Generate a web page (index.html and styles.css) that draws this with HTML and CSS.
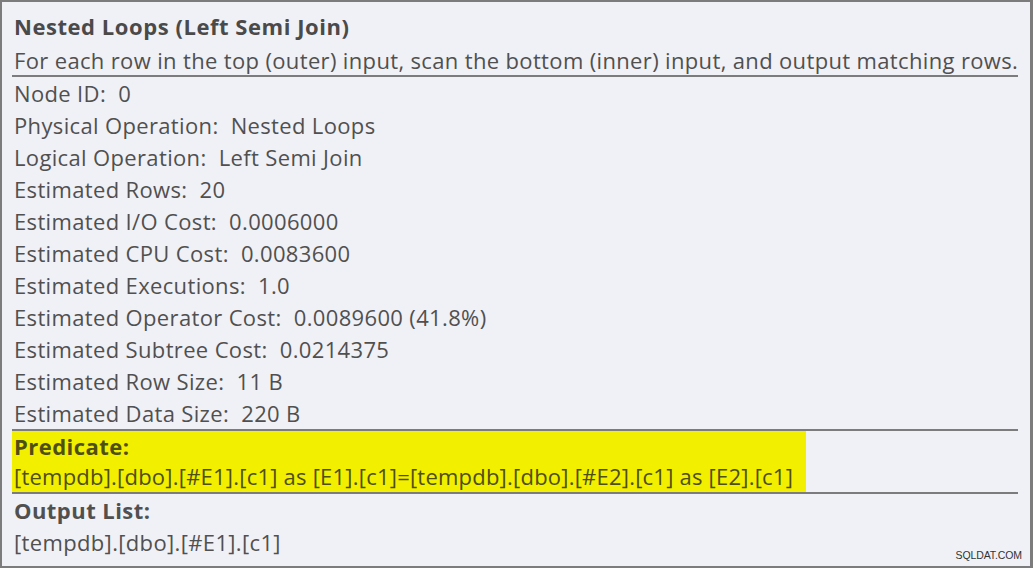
FILE: index.html
```html
<!DOCTYPE html>
<html>
<head>
<meta charset="utf-8">
<link rel="stylesheet" href="styles.css">
</head>
<body>
<div class="panel">
  <div class="title">Nested Loops (Left Semi Join)</div>
  <div class="desc">For each row in the top (outer) input, scan the bottom (inner) input, and output matching rows.</div>
  <div class="props">
    <div class="row">Node ID:&nbsp; 0</div>
    <div class="row">Physical Operation:&nbsp; Nested Loops</div>
    <div class="row">Logical Operation:&nbsp; Left Semi Join</div>
    <div class="row">Estimated Rows:&nbsp; 20</div>
    <div class="row">Estimated I/O Cost:&nbsp; 0.0006000</div>
    <div class="row">Estimated CPU Cost:&nbsp; 0.0083600</div>
    <div class="row">Estimated Executions:&nbsp; 1.0</div>
    <div class="row">Estimated Operator Cost:&nbsp; 0.0089600 (41.8%)</div>
    <div class="row">Estimated Subtree Cost:&nbsp; 0.0214375</div>
    <div class="row">Estimated Row Size:&nbsp; 11 B</div>
    <div class="row">Estimated Data Size:&nbsp; 220 B</div>
  </div>
  <div class="section">
    <div class="highlight">
      <div class="sec-head pred-head">Predicate:</div>
      <div class="sec-val pred-val">[tempdb].[dbo].[#E1].[c1] as [E1].[c1]=[tempdb].[dbo].[#E2].[c1] as [E2].[c1]</div>
    </div>
  </div>
  <div class="section">
    <div class="sec-head">Output List:</div>
    <div class="sec-val">[tempdb].[dbo].[#E1].[c1]</div>
  </div>
  <div class="watermark">SQLDAT.COM</div>
</div>
</body>
</html>
```

FILE: styles.css
```css
html, body {
  margin: 0;
  padding: 0;
}
body {
  width: 1033px;
  height: 568px;
  overflow: hidden;
}
.panel {
  position: relative;
  box-sizing: border-box;
  width: 1033px;
  height: 568px;
  background: #f0f1f6;
  border: 2px solid #7c7c7c;
  border-right-width: 3px;
  padding: 0 12px 0 10px;
  color: #505050;
  font-family: "Open Sans", "Noto Sans", sans-serif;
  font-size: 22px;
  letter-spacing: 0.35px;
  white-space: nowrap;
}
.title {
  font-weight: bold;
  letter-spacing: 0.55px;
  line-height: 32px;
  padding-top: 8px;
  padding-left: 2px;
  color: #4a4a4a;
}
.desc {
  line-height: 29px;
  margin-top: 4px;
  padding-left: 2px;
  border-bottom: 2px solid #7c7c7c;
}
.props {
  padding-left: 2px;
}
.row {
  line-height: 32px;
}
.section {
  border-top: 2px solid #7c7c7c;
}
.highlight {
  display: inline-block;
  vertical-align: top;
  background: #f2f000;
  color: #4f4f14;
  padding: 0 13px 1px 2px;
}
.section > .sec-head,
.section > .sec-val {
  padding-left: 2px;
}
.sec-head {
  font-weight: bold;
  letter-spacing: 0.45px;
  line-height: 32px;
}
.sec-val {
  line-height: 32px;
}
.pred-head,
.pred-val {
  line-height: 30px;
}
.pred-val {
  letter-spacing: 0.22px;
}
.watermark {
  position: absolute;
  right: 8px;
  bottom: 5px;
  font-family: "Liberation Sans", Arial, sans-serif;
  font-size: 10.5px;
  letter-spacing: -0.1px;
  color: #333333;
}
```
